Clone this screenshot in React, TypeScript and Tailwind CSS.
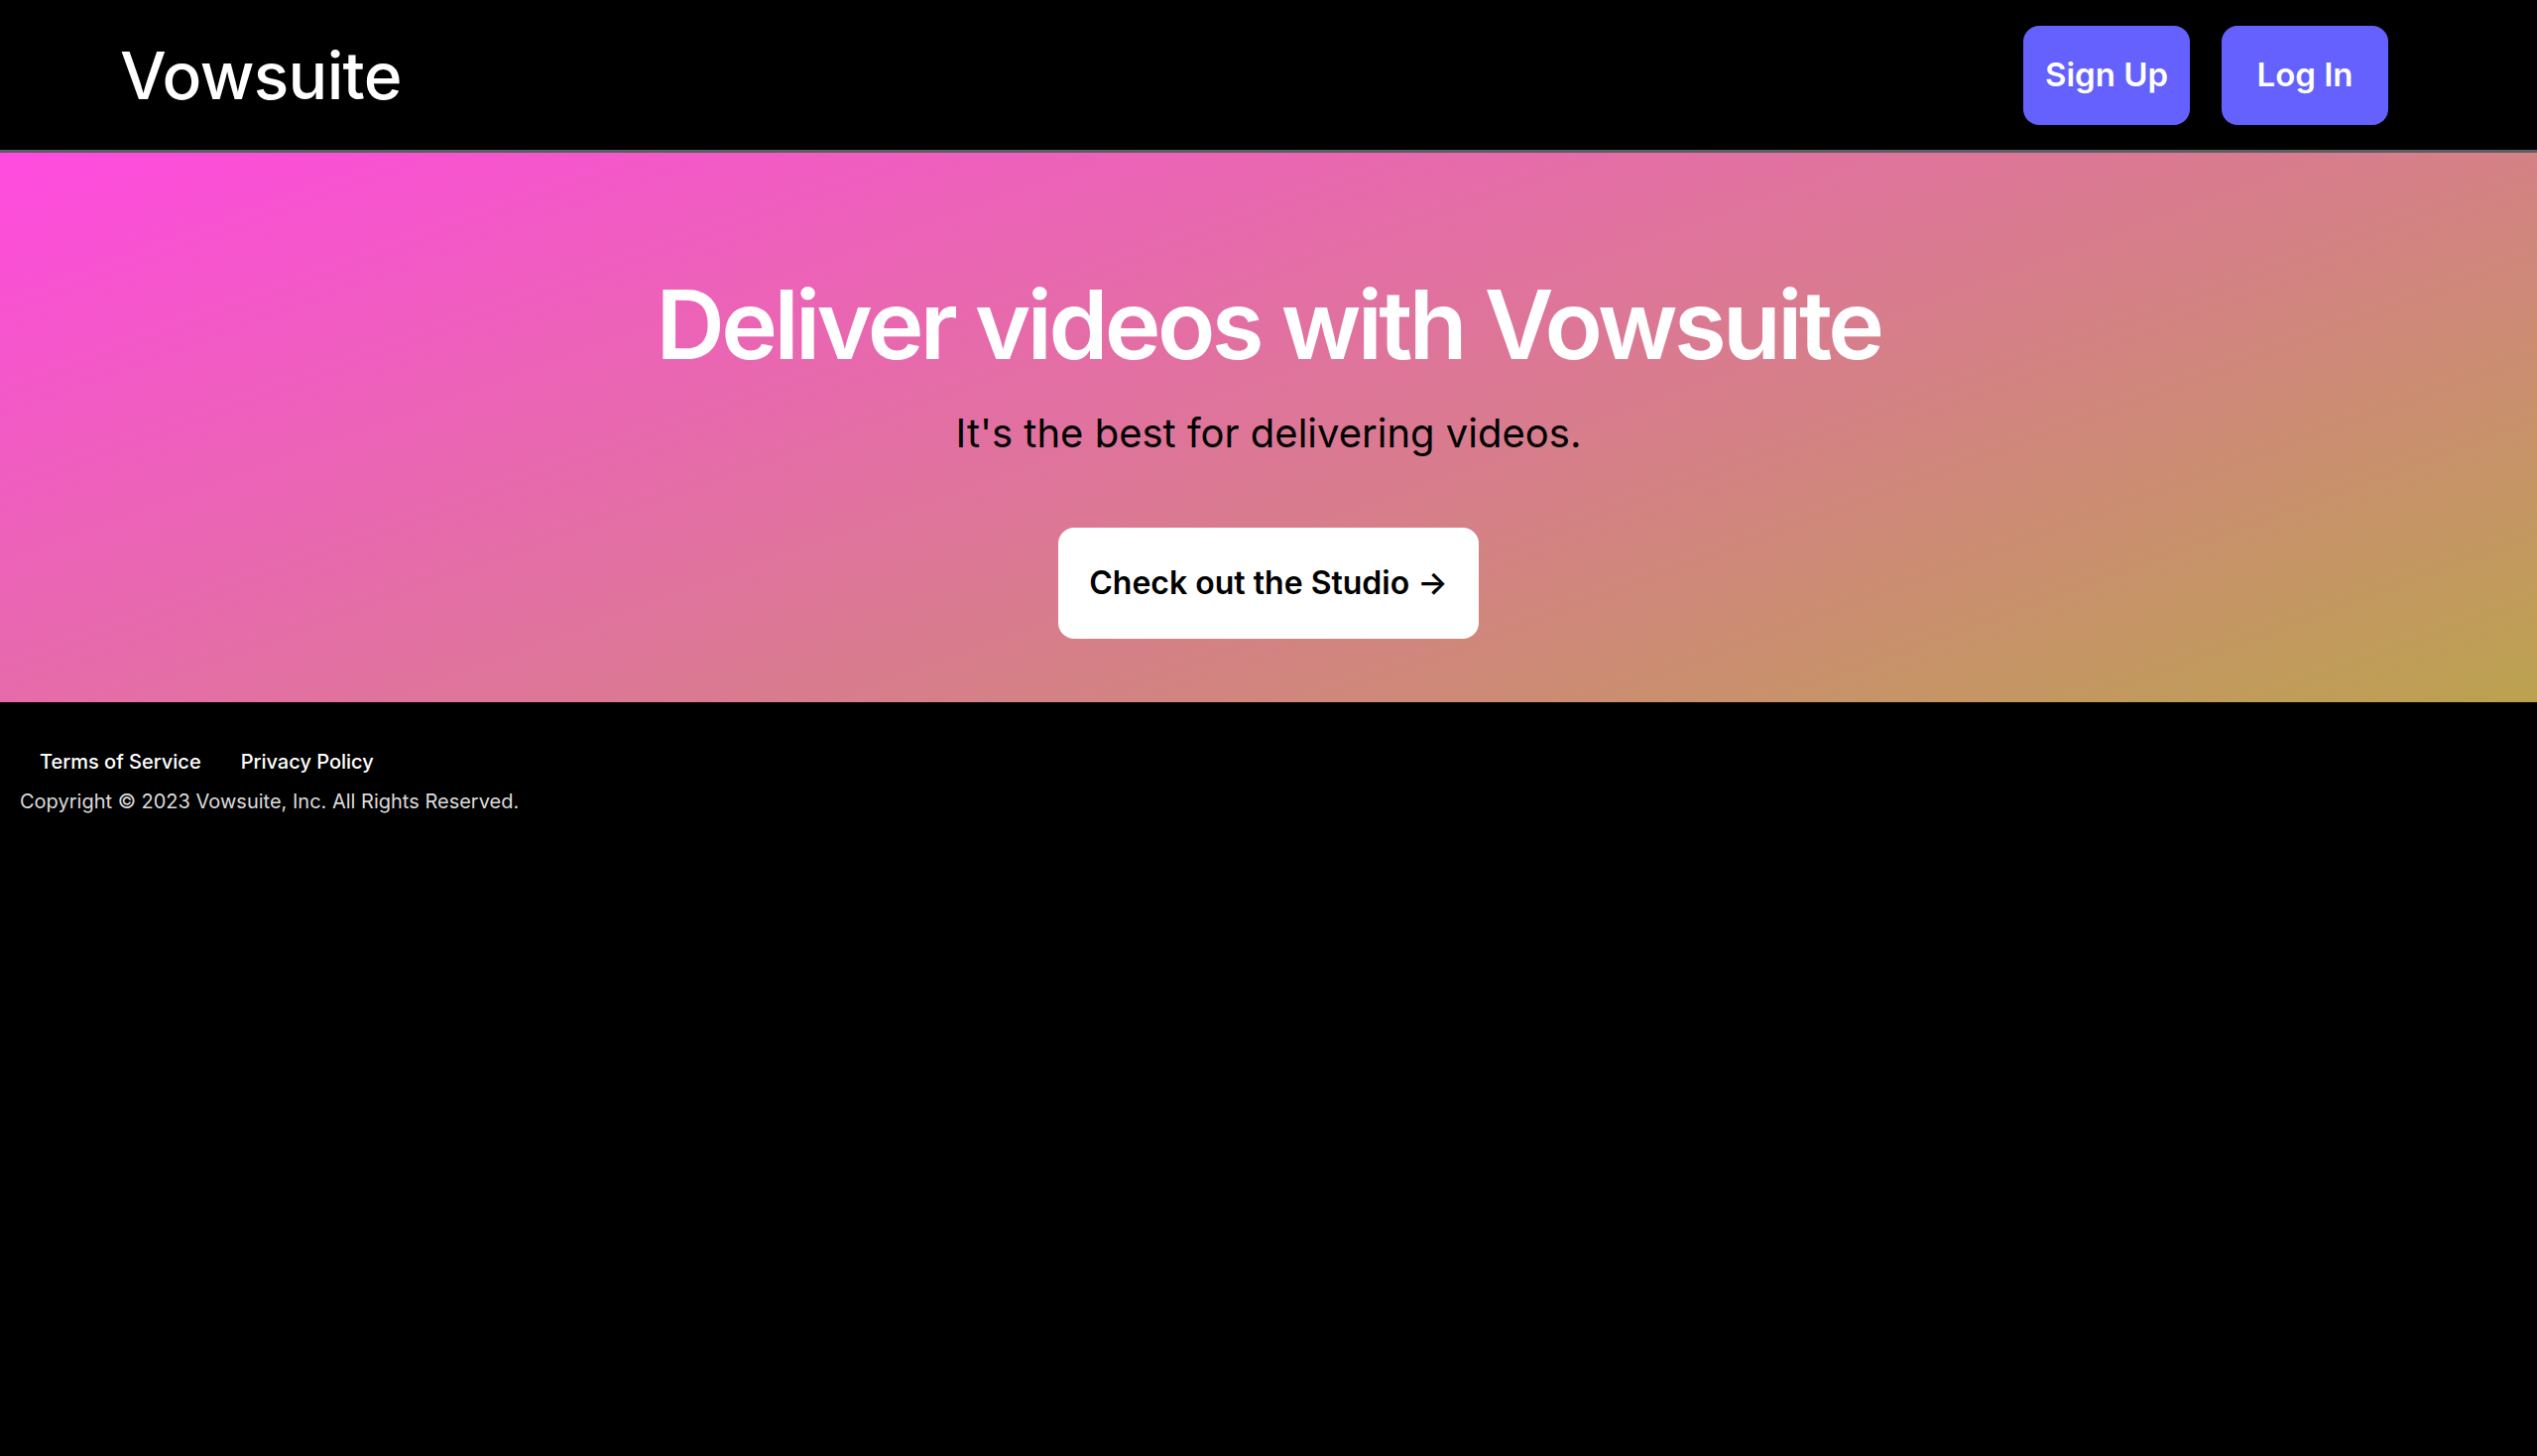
import React from "react";

export default function App() {
  return (
    <div className="min-h-screen w-full bg-black font-['Inter',_'Liberation_Sans',_sans-serif]">
      <header className="flex h-[154px] items-center justify-between border-b-[3px] border-[#5b6065] bg-black pl-[121px] pr-[150px]">
        <div className="text-[66px] font-medium leading-none tracking-[-0.01em] text-white">Vowsuite</div>
        <div className="flex items-center gap-[32px]">
          <button className="flex h-[100px] w-[168px] items-center justify-center rounded-[16px] bg-[#6461fe] text-[33px] font-semibold leading-none text-white">
            Sign Up
          </button>
          <button className="flex h-[100px] w-[168px] items-center justify-center rounded-[16px] bg-[#6461fe] text-[33px] font-semibold leading-none text-white">
            Log In
          </button>
        </div>
      </header>
      <section className="flex h-[554px] flex-col items-center bg-[linear-gradient(160deg,#ff4ae0,#bba24f)] pt-[125px]">
        <h1 className="text-[96px] font-semibold leading-none tracking-[-0.037em] text-white">Deliver videos with Vowsuite</h1>
        <p className="mt-[42px] text-[40px] leading-none text-black">It's the best for delivering videos.</p>
        <a
          href="#"
          className="mt-[75px] flex h-[112px] w-[424px] items-center justify-center rounded-[16px] bg-white text-[32px] font-semibold leading-none text-black"
        >
          Check out the Studio →
        </a>
      </section>
      <footer className="bg-black px-[20px] pt-[50px]">
        <div className="flex">
          <a href="#" className="px-[20px] text-[20px] font-medium leading-none text-white">Terms of Service</a>
          <a href="#" className="px-[20px] text-[20px] font-medium leading-none text-white">Privacy Policy</a>
        </div>
        <p className="mt-[20px] text-[20px] leading-none text-[#dcdcdc]">Copyright © 2023 Vowsuite, Inc. All Rights Reserved.</p>
      </footer>
    </div>
  );
}
